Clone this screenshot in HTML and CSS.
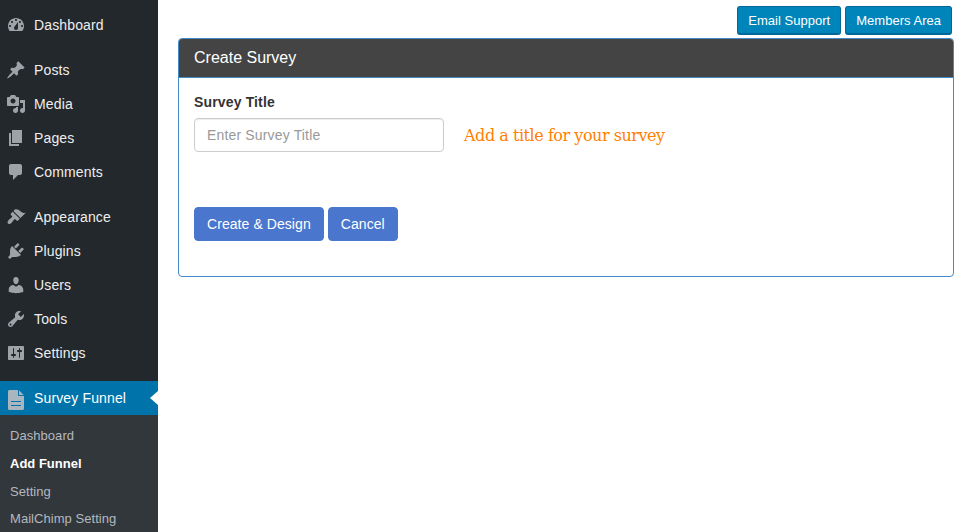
FILE: index.html
```html
<!DOCTYPE html>
<html lang="en">
<head>
<meta charset="utf-8">
<title>Create Survey</title>
<link rel="stylesheet" href="styles.css">
</head>
<body>
<div class="layout">
  <nav class="sidebar">
    <ul class="menu">
      <li class="item"><svg class="ico" viewBox="0 0 20 20"><path fill-rule="evenodd" d="M3.76 16h12.48c1.1-1.37 1.76-3.11 1.76-5 0-4.42-3.58-8-8-8s-8 3.58-8 8c0 1.89.66 3.63 1.76 5zM10 4c.55 0 1 .45 1 1s-.45 1-1 1-1-.45-1-1 .45-1 1-1zM6 6c.55 0 1 .45 1 1s-.45 1-1 1-1-.45-1-1 .45-1 1-1zm8 0c.55 0 1 .45 1 1s-.45 1-1 1-1-.45-1-1 .45-1 1-1zm-5.37 5.55L12 7v6c0 1.1-.9 2-2 2s-2-.9-2-2c0-.57.24-1.08.63-1.45zM4 10c.55 0 1 .45 1 1s-.45 1-1 1-1-.45-1-1 .45-1 1-1zm12 0c.55 0 1 .45 1 1s-.45 1-1 1-1-.45-1-1 .45-1 1-1z"/></svg>Dashboard</li>
      <li class="item sep"><svg class="ico" viewBox="0 0 20 20"><path d="M10.44 3.02l1.82-1.82 6.36 6.35-1.83 1.82c-1.05-.68-2.48-.57-3.41.36l-.75.75c-.92.93-1.04 2.35-.35 3.41l-1.83 1.82-2.41-2.41-2.8 2.79c-.42.42-3.38 2.71-3.8 2.29s1.86-3.39 2.28-3.81l2.79-2.79L4.1 9.36l1.83-1.82c1.05.69 2.48.57 3.4-.36l.75-.75c.93-.92 1.05-2.35.36-3.41z"/></svg>Posts</li>
      <li class="item"><svg class="ico" viewBox="0 0 20 20"><path fill-rule="evenodd" d="M13 11V4c0-.55-.45-1-1-1h-1.670L9 1H5L3.670 3H2c-.55 0-1 .45-1 1v7c0 .55.45 1 1 1h10c.55 0 1-.45 1-1zM7 4.500c1.380 0 2.500 1.120 2.500 2.500S8.380 9.500 7 9.500 4.500 8.380 4.500 7 5.620 4.500 7 4.500z"/><path d="M14 6h5v10.500c0 1.380-1.120 2.500-2.500 2.500S14 17.880 14 16.500s1.120-2.500 2.500-2.500c.17 0 .34.020.5.050V9h-3V6zm-4 8.050V13h2v3.500c0 1.380-1.120 2.500-2.500 2.500S7 17.880 7 16.500 8.120 14 9.500 14c.17 0 .34.020.5.050z"/></svg>Media</li>
      <li class="item"><svg class="ico" viewBox="0 0 20 20"><path d="M6 15V2h10v13H6zm-1 1h8v2H3V5h2v11z"/></svg>Pages</li>
      <li class="item"><svg class="ico" viewBox="0 0 20 20"><path d="M5 2h9c1.100 0 2 .9 2 2v7c0 1.100-.9 2-2 2h-2l-5 5v-5H5c-1.100 0-2-.9-2-2V4c0-1.100.9-2 2-2z"/></svg>Comments</li>
      <li class="item sep"><svg class="ico" viewBox="0 0 20 20"><path d="M14.480 11.060L7.410 3.990l1.500-1.500c.5-.56 2.300-.47 3.510.32 1.210.8 1.430 1.280 2.910 2.100 1.180.64 2.450 1.260 4.450.85zm-.71.71L6.700 4.700 4.930 6.470c-.39.39-.39 1.020 0 1.410l1.060 1.060c.39.39.39 1.030 0 1.420-.6.6-1.430 1.150-2.210 1.690-.35.26-.7.530-1.010.840-1.430 1.430-1.430 3.090-.83 3.690.6.6 2.260.6 3.690-.83.310-.31.580-.66.840-1.010.54-.78 1.090-1.610 1.690-2.210.39-.39 1.030-.39 1.420 0l1.060 1.060c.39.39 1.020.39 1.410 0z"/></svg>Appearance</li>
      <li class="item"><svg class="ico" viewBox="0 0 20 20"><path d="M13.110 4.360L9.870 7.600 8 5.730l3.240-3.240c.35-.34 1.050-.2 1.560.32.520.51.660 1.210.310 1.550zm-8 1.770l.91-1.120 9.010 9.010-1.190.84c-.71.71-2.630 1.160-3.820 1.160H6.140L4.900 17.260c-.59.59-1.540.59-2.120 0-.59-.58-.59-1.530 0-2.120l1.240-1.240v-3.880c0-1.130.4-3.190 1.090-3.890zm7.260 3.970l3.240-3.240c.34-.35 1.040-.21 1.550.31.520.51.660 1.210.310 1.550l-3.240 3.250z"/></svg>Plugins</li>
      <li class="item"><svg class="ico" viewBox="0 0 20 20"><path d="M10 9.250c-2.270 0-2.730-3.440-2.730-3.440C7 4.020 7.820 2 9.970 2c2.160 0 2.980 2.020 2.710 3.810 0 0-.41 3.440-2.680 3.440zm0 2.570L12.720 10c2.390 0 4.520 2.330 4.520 4.530v2.490s-3.650 1.130-7.240 1.130c-3.650 0-7.240-1.130-7.240-1.130v-2.490c0-2.250 1.940-4.480 4.470-4.480z"/></svg>Users</li>
      <li class="item"><svg class="ico" viewBox="0 0 20 20"><path fill-rule="evenodd" d="M16.680 9.770c-1.340 1.340-3.300 1.670-4.950.99l-5.410 6.520c-.99.99-2.590.99-3.580 0s-.99-2.590 0-3.570l6.520-5.420c-.68-1.650-.35-3.610.99-4.950 1.280-1.280 3.120-1.620 4.720-1.060l-2.890 2.890 2.820 2.820 2.860-2.870c.53 1.580.18 3.390-1.080 4.650zM3.810 16.210c.4.39 1.040.39 1.430 0 .4-.4.4-1.040 0-1.430-.39-.4-1.030-.4-1.430 0-.39.39-.39 1.030 0 1.430z"/></svg>Tools</li>
      <li class="item"><svg class="ico" viewBox="0 0 20 20"><path fill-rule="evenodd" d="M18 16V4c0-.55-.45-1-1-1H3c-.55 0-1 .45-1 1v12c0 .55.45 1 1 1h14c.55 0 1-.45 1-1zM8 11h1c.55 0 1 .45 1 1s-.45 1-1 1H8v1.500c0 .28-.22.5-.5.5s-.5-.22-.5-.5V13H6c-.55 0-1-.45-1-1s.45-1 1-1h1V5.500c0-.28.22-.5.5-.5s.5.22.5.5V11zm5-2h-1c-.55 0-1-.45-1-1s.45-1 1-1h1V5.500c0-.28.22-.5.5-.5s.5.22.5.5V7h1c.55 0 1 .45 1 1s-.45 1-1 1h-1v5.500c0 .28-.22.5-.5.5s-.5-.22-.5-.5V9z"/></svg>Settings</li>
      <li class="item sep current"><svg class="ico ico-tall" viewBox="0 0 20 24"><path fill-rule="evenodd" d="M3.500 4H12v5c0 .6.4 1 1 1h5v12.500c0 .8-.7 1.500-1.500 1.500h-13C2.700 24 2 23.300 2 22.500v-17C2 4.700 2.700 4 3.500 4zM13 4.300L17.700 9H13zM5 15v1h10v-1zm0 4v1h10v-1z"/></svg>Survey Funnel</li>
    </ul>
    <ul class="submenu">
      <li>Dashboard</li>
      <li class="active">Add Funnel</li>
      <li>Setting</li>
      <li>MailChimp Setting</li>
    </ul>
  </nav>
  <main class="content">
    <div class="toolbar">
      <a class="btn-top">Email Support</a>
      <a class="btn-top">Members Area</a>
    </div>
    <section class="panel">
      <header class="panel-head">Create Survey</header>
      <div class="panel-body">
        <label class="label">Survey Title</label>
        <div class="field-row">
          <input class="input" type="text" placeholder="Enter Survey Title">
          <span class="hint">Add a title for your survey</span>
        </div>
        <div class="actions">
          <a class="btn">Create &amp; Design</a>
          <a class="btn">Cancel</a>
        </div>
      </div>
    </section>
  </main>
</div>
</body>
</html>
```
FILE: styles.css
```css
* { box-sizing: border-box; }
html, body { margin: 0; padding: 0; height: 100%; overflow: hidden; }
body { font-family: "Liberation Sans", Arial, sans-serif; background: #fff; color: #333; }
ul { list-style: none; margin: 0; padding: 0; }
.layout { display: flex; height: 532px; overflow: hidden; }
.sidebar { width: 158px; flex: none; background: #23282d; }
.menu { padding-top: 8px; }
.item { display: flex; align-items: center; height: 34px; padding-left: 6px; font-size: 14px; letter-spacing: .14px; color: #eee; position: relative; }
.item.sep { margin-top: 11px; }
.ico { width: 20px; height: 20px; margin-right: 8px; flex: none; fill: #9ea3a8; }
.ico-tall { height: 24px; }
.current { background: #0073aa; color: #fff; }
.current .ico { fill: #a9b6bf; }
.current::after { content: ""; position: absolute; right: 0; top: 10px; border: 7px solid transparent; border-right: 8px solid #fff; border-left-width: 0; }
.submenu { background: #32373c; padding: 7.300px 0 0 10px; font-size: 13px; letter-spacing: .05px; color: #b4b9be; }
.submenu li { height: 27.700px; line-height: 27.700px; }
.submenu .active { color: #fff; font-weight: 700; letter-spacing: 0; }
.content { flex: 1; min-width: 0; padding: 6px 8px 0 20px; }
.toolbar { display: flex; justify-content: flex-end; gap: 4px; margin-right: 2px; height: 29px; }
.btn-top { height: 29px; line-height: 27px; padding: 0 10px; font-size: 13px; letter-spacing: .02px; color: #fff; background: #0085ba; border: 1px solid #006799; border-bottom-width: 2px; border-radius: 3px; }
.panel { margin-top: 3px; height: 239px; border: 1px solid #428bca; border-radius: 4px; overflow: hidden; }
.panel-head { height: 39px; line-height: 37px; padding-left: 15px; background: #444; color: #fff; font-size: 16px; border-bottom: 1px solid #428bca; }
.panel-body { padding: 14px 15px 0; }
.label { display: block; font-size: 14px; font-weight: 700; line-height: 20px; letter-spacing: .15px; color: #333; margin-bottom: 6px; }
.field-row { display: flex; align-items: center; height: 34px; }
.input { width: 250px; height: 34px; padding: 6px 12px; border: 1px solid #ccc; border-radius: 4px; font: 14px "Liberation Sans", Arial, sans-serif; letter-spacing: .16px; color: #555; background: #fff; box-shadow: inset 0 1px 1px rgba(0,0,0,.075); }
.input::placeholder { color: #999; opacity: 1; }
.hint { margin-left: 20px; font-family: "DejaVu Serif", "Liberation Serif", serif; font-size: 16px; letter-spacing: -.46px; color: #ff7f00; }
.actions { display: flex; gap: 4px; margin-top: 55px; }
.btn { height: 34px; line-height: 32px; padding: 0 12px; font-size: 14px; letter-spacing: .07px; color: #fff; background: #4a76ce; border: 1px solid #4a76ce; border-radius: 4px; }
```
